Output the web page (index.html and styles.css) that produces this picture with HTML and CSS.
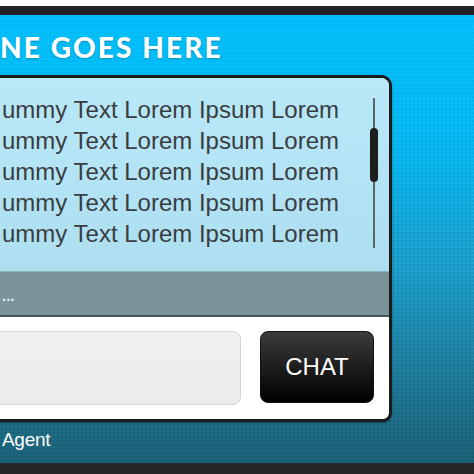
FILE: index.html
```html
<!DOCTYPE html>
<html>
<head>
<meta charset="utf-8">
<link rel="stylesheet" href="styles.css">
</head>
<body>
<div class="frame">
  <div class="header"><h1 class="title">NE GOES HERE</h1></div>
  <div class="chatbox">
    <div class="messages">
      <div class="lines">
        <p class="line">ummy Text Lorem Ipsum Lorem</p>
        <p class="line">ummy Text Lorem Ipsum Lorem</p>
        <p class="line">ummy Text Lorem Ipsum Lorem</p>
        <p class="line">ummy Text Lorem Ipsum Lorem</p>
        <p class="line">ummy Text Lorem Ipsum Lorem</p>
      </div>
      <div class="scroll"><div class="thumb"></div></div>
    </div>
    <div class="status">...</div>
    <div class="compose">
      <div class="input"></div>
      <button class="chat">CHAT</button>
    </div>
  </div>
  <div class="footer">Agent</div>
</div>
</body>
</html>
```
FILE: styles.css
```css
html, body {
  margin: 0;
  padding: 0;
  width: 474px;
  height: 474px;
  overflow: hidden;
  background: #fff;
}
.frame {
  margin-top: 6px;
  height: 468px;
  box-sizing: border-box;
  border-top: 9px solid #222325;
  border-bottom: 11px solid #232526;
  background-color: #1a8ab0;
  background-image:
    linear-gradient(180deg, rgba(3,192,252,0.75) 0px, rgba(3,192,252,0.4) 100px, rgba(3,192,252,0) 220px),
    radial-gradient(circle, rgba(0,40,60,0.16) 0.9px, transparent 1.2px),
    linear-gradient(180deg, #02c0fc 0px, #08b8f2 120px, #1ca2d0 250px, #1f84a6 340px, #1d6a82 420px, #1c6077 453px);
  background-size: 100% 100%, 4px 4px, 100% 100%;
  display: flex;
  flex-direction: column;
  font-family: "Liberation Sans", Arial, sans-serif;
}
.header {
  height: 60px;
  display: flex;
  align-items: center;
}
.title {
  margin: 3px 0 0 0;
  color: #fff;
  font-family: "Lato", "DejaVu Sans", sans-serif;
  font-weight: 900;
  font-size: 28px;
  letter-spacing: 2.1px;
  line-height: 1;
  text-shadow: 0 1px 2px rgba(0,0,0,0.25);
}
.chatbox {
  margin-left: -20px;
  width: 412px;
  height: 347px;
  box-sizing: border-box;
  border: 3px solid #1b1b1c;
  border-radius: 0 11px 9px 0;
  background: #fff;
  overflow: hidden;
  display: flex;
  flex-direction: column;
  box-shadow: 0 1px 2px rgba(0,0,0,0.4);
}
.messages {
  height: 193px;
  flex: none;
  background: linear-gradient(180deg, #b9e8f8, #addff1);
  display: flex;
  padding-left: 19px;
  box-sizing: border-box;
}
.lines {
  padding-top: 16px;
  flex: 1;
}
.line {
  margin: 0;
  font-size: 24px;
  line-height: 31px;
  color: #3a3d40;
  white-space: nowrap;
}
.scroll {
  width: 2px;
  margin: 20px 14px 0 0;
  height: 150px;
  background: #5b6468;
  position: relative;
}
.thumb {
  position: absolute;
  left: -3px;
  top: 30px;
  width: 8px;
  height: 54px;
  border-radius: 4px;
  background: #1e1e1e;
}
.status {
  height: 46px;
  flex: none;
  background: #7b949c;
  border-top: 1px solid #90b6c2;
  border-bottom: 2px solid #44555b;
  box-sizing: border-box;
  padding-left: 19px;
  color: #e2eef2;
  font-size: 15px;
  line-height: 48px;
  font-weight: bold;
}
.compose {
  flex: 1;
  display: flex;
  padding: 14px 0 0 0;
  gap: 19px;
  box-sizing: border-box;
}
.input {
  width: 258px;
  height: 74px;
  box-sizing: border-box;
  background: linear-gradient(180deg, #f0f0f0, #ececec);
  border: 1px solid #d4d4d4;
  border-radius: 8px;
}
.chat {
  width: 114px;
  height: 72px;
  border: 1px solid #111;
  border-radius: 8px;
  background: linear-gradient(180deg, #3c3c3c, #111 70%, #000);
  color: #fff;
  font-family: "Liberation Sans", Arial, sans-serif;
  font-size: 24px;
  padding: 0;
}
.footer {
  padding: 7px 0 0 2px;
  color: #fff;
  font-size: 19px;
  letter-spacing: -0.3px;
}
```
